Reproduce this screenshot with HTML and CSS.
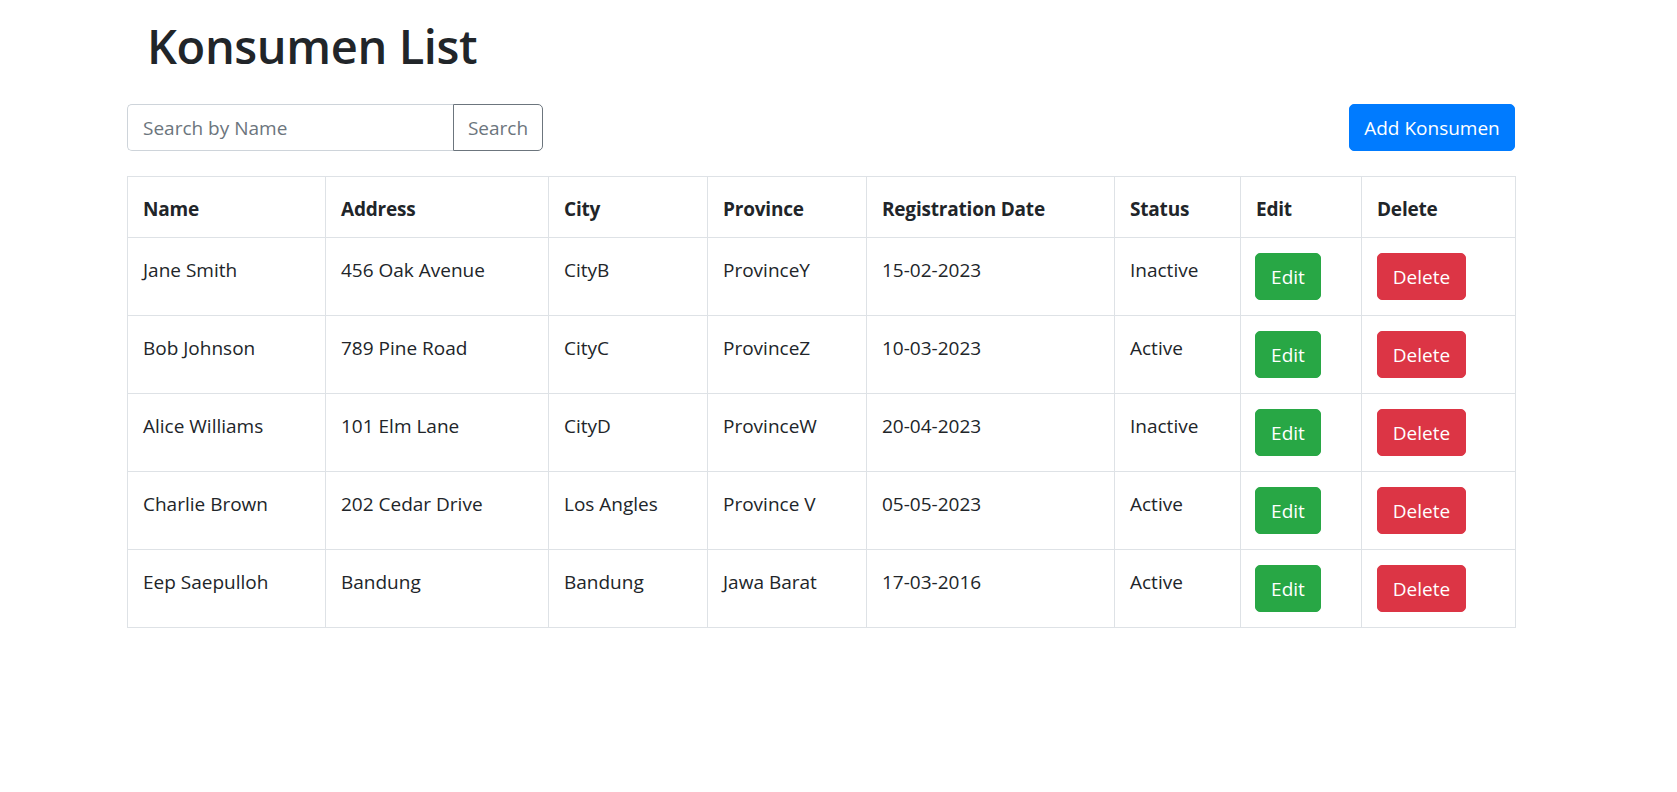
FILE: index.html
```html
<!DOCTYPE html>
<html lang="en">
<head>
<meta charset="utf-8">
<title>Konsumen List</title>
<link rel="stylesheet" href="styles.css">
</head>
<body>
<div class="page">
  <h1 class="title">Konsumen List</h1>
  <div class="toolbar">
    <form class="search-group">
      <input class="search-input" type="text" placeholder="Search by Name">
      <button class="search-btn" type="button">Search</button>
    </form>
    <button class="btn btn-primary add-btn" type="button">Add Konsumen</button>
  </div>
  <table class="data-table">
    <colgroup>
      <col class="c-name"><col class="c-address"><col class="c-city"><col class="c-province">
      <col class="c-date"><col class="c-status"><col class="c-edit"><col class="c-delete">
    </colgroup>
    <thead>
      <tr>
        <th>Name</th><th>Address</th><th>City</th><th>Province</th>
        <th>Registration Date</th><th>Status</th><th>Edit</th><th>Delete</th>
      </tr>
    </thead>
    <tbody>
      <tr>
        <td>Jane Smith</td><td>456 Oak Avenue</td><td>CityB</td><td>ProvinceY</td>
        <td>15-02-2023</td><td>Inactive</td>
        <td class="btn-cell"><button class="btn btn-success edit-btn" type="button">Edit</button></td>
        <td class="btn-cell"><button class="btn btn-danger delete-btn" type="button">Delete</button></td>
      </tr>
      <tr>
        <td>Bob Johnson</td><td>789 Pine Road</td><td>CityC</td><td>ProvinceZ</td>
        <td>10-03-2023</td><td>Active</td>
        <td class="btn-cell"><button class="btn btn-success edit-btn" type="button">Edit</button></td>
        <td class="btn-cell"><button class="btn btn-danger delete-btn" type="button">Delete</button></td>
      </tr>
      <tr>
        <td>Alice Williams</td><td>101 Elm Lane</td><td>CityD</td><td>ProvinceW</td>
        <td>20-04-2023</td><td>Inactive</td>
        <td class="btn-cell"><button class="btn btn-success edit-btn" type="button">Edit</button></td>
        <td class="btn-cell"><button class="btn btn-danger delete-btn" type="button">Delete</button></td>
      </tr>
      <tr>
        <td>Charlie Brown</td><td>202 Cedar Drive</td><td>Los Angles</td><td>Province V</td>
        <td>05-05-2023</td><td>Active</td>
        <td class="btn-cell"><button class="btn btn-success edit-btn" type="button">Edit</button></td>
        <td class="btn-cell"><button class="btn btn-danger delete-btn" type="button">Delete</button></td>
      </tr>
      <tr>
        <td>Eep Saepulloh</td><td>Bandung</td><td>Bandung</td><td>Jawa Barat</td>
        <td>17-03-2016</td><td>Active</td>
        <td class="btn-cell"><button class="btn btn-success edit-btn" type="button">Edit</button></td>
        <td class="btn-cell"><button class="btn btn-danger delete-btn" type="button">Delete</button></td>
      </tr>
    </tbody>
  </table>
</div>
</body>
</html>
```

FILE: styles.css
```css
* { box-sizing: border-box; }

html, body {
  margin: 0;
  padding: 0;
  background: #fff;
}

body {
  font-family: "Open Sans", "Noto Sans", "Liberation Sans", sans-serif;
  font-size: 19px;
  line-height: 30px;
  color: #212529;
}

.page {
  width: 1388px;
  margin-left: 127px;
}

.title {
  margin: 16px 0 28px;
  padding-left: 20px;
  font-size: 47px;
  line-height: 60px;
  font-weight: 600;
  letter-spacing: -0.4px;
  color: #212529;
}

.toolbar {
  display: flex;
  justify-content: space-between;
  align-items: center;
  margin-bottom: 25px;
}

.search-group {
  display: flex;
  margin: 0;
}

.search-input {
  width: 326px;
  height: 47px;
  padding: 0 15px;
  border: 1px solid #ced4da;
  border-right: 0;
  border-radius: 5px 0 0 5px;
  font: inherit;
  color: #495057;
  outline: none;
}

.search-input::placeholder {
  color: #6c757d;
  opacity: 1;
}

.search-btn {
  width: 90px;
  height: 47px;
  padding: 0;
  border: 1px solid #6c757d;
  border-radius: 0 5px 5px 0;
  background: #fff;
  font: inherit;
  color: #6c757d;
}

.btn {
  display: block;
  height: 47px;
  padding: 0;
  border: 1px solid transparent;
  border-radius: 5px;
  font: inherit;
  line-height: 30px;
  text-align: center;
  color: #fff;
}

.btn-primary { background: #007bff; border-color: #007bff; }
.btn-success { background: #28a745; border-color: #28a745; }
.btn-danger  { background: #dc3545; border-color: #dc3545; }

.add-btn { width: 166px; }
.edit-btn { width: 66px; margin-left: -1px; }
.delete-btn { width: 89px; }

.data-table {
  width: 1388px;
  table-layout: fixed;
  border-collapse: collapse;
  border: 1px solid #dee2e6;
}

.c-name { width: 198px; }
.c-address { width: 223px; }
.c-city { width: 159px; }
.c-province { width: 159px; }
.c-date { width: 248px; }
.c-status { width: 126px; }
.c-edit { width: 121px; }
.c-delete { width: 154px; }

.data-table th,
.data-table td {
  padding: 17px 15px 13px;
  border: 1px solid #dee2e6;
  text-align: left;
  vertical-align: top;
  white-space: nowrap;
}

.data-table td.btn-cell {
  padding-top: 15px;
  padding-bottom: 15px;
}

.data-table th {
  font-weight: 700;
  letter-spacing: -0.2px;
}
```
